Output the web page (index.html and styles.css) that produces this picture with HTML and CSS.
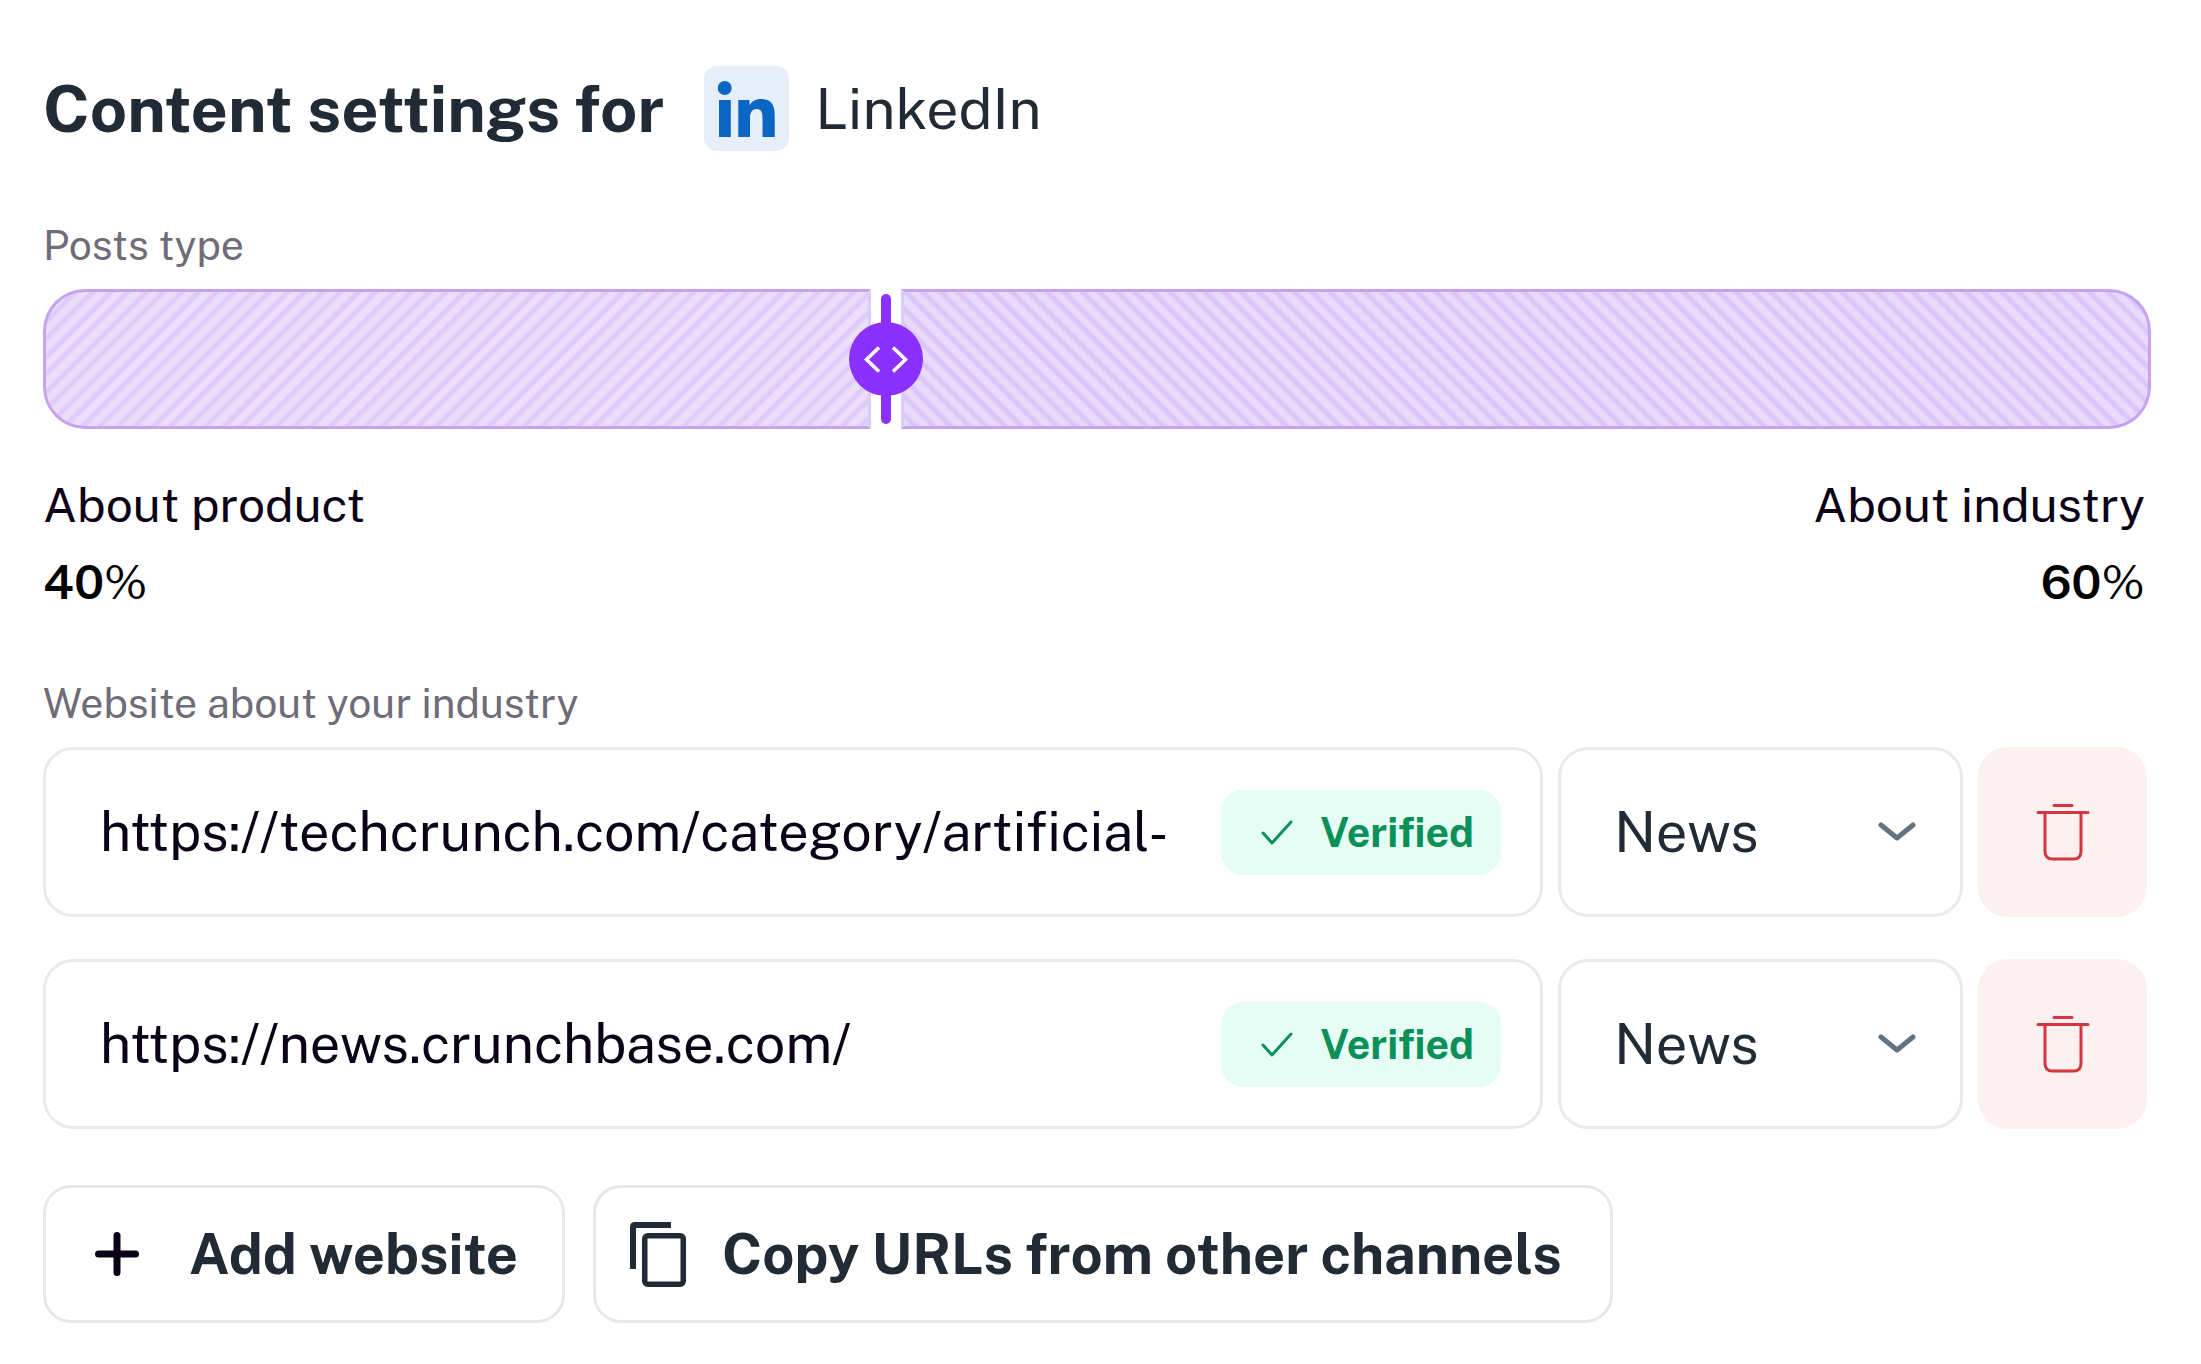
FILE: index.html
```html
<!DOCTYPE html>
<html lang="en">

<head>
    <meta charset="UTF-8">
    <meta name="viewport" content="width=device-width, initial-scale=1.0">
    <title>Content settings</title>
    <link rel="stylesheet" href="styles.css">
</head>

<body>
    <main class="settings">
        <header class="header">
            <h1>Content settings for</h1>
            <div class="channel">
                <svg class="channel-logo" viewBox="0 0 85 85" aria-hidden="true">
                    <rect width="85" height="85" rx="13" fill="#e5eef9" />
                    <g fill="#0a66c2">
                        <circle cx="20.7" cy="22" r="7" />
                        <path d="M15 34h11.8v37H15z" />
                        <path d="M34.3 34h11.2v5.2c2-3.6 6-6.2 11.7-6.2 10.5 0 13.5 6.5 13.5 16.5V71H58.5V52c0-5-.8-9-5.8-9s-6.7 4-6.700 9v19H34.3z" />
                    </g>
                </svg>
                <span>LinkedIn</span>
            </div>
        </header>

        <form id="settingsform">
            <label class="label" for="split">Posts type</label>
            <div class="slider" id="slider" style="--product: 40%">
                <div class="share share-product"></div>
                <div class="handle">
                    <svg viewBox="0 0 74 140" aria-hidden="true">
                        <rect x="32" y="5" width="10" height="130" rx="5" fill="#8c30ff" />
                        <circle cx="37" cy="70" r="37" fill="#8c30ff" />
                        <path d="M30 58.5 17.500 70.5 30 82.5M44 58.5 56.500 70.5 44 82.5" fill="none" stroke="#fff" stroke-width="3.500" />
                    </svg>
                </div>
                <div class="share share-industry"></div>
                <input type="range" id="split" name="split" min="0" max="100" value="40">
            </div>

            <div class="legend">
                <div>
                    <p>About product</p>
                    <p class="amount"><b id="product-value">40</b>%</p>
                </div>
                <div class="legend-right">
                    <p>About industry</p>
                    <p class="amount"><b id="industry-value">60</b>%</p>
                </div>
            </div>

            <label class="label" for="url1">Website about your industry</label>
            <div class="row">
                <div class="field url">
                    <input type="text" id="url1" name="url1" value="https://techcrunch.com/category/artificial-intelligence/">
                    <span class="badge">
                        <svg viewBox="0 0 34 28" aria-hidden="true"><path d="M3 15 12 25 31 4" /></svg>
                        Verified
                    </span>
                </div>
                <div class="field type">
                    <select name="type1" aria-label="Website type">
                        <option>News</option>
                        <option>Blog</option>
                    </select>
                    <svg class="chevron" viewBox="0 0 38 20" aria-hidden="true"><path d="M3 3 19 16 35 3" /></svg>
                </div>
                <button class="delete" type="button" aria-label="Delete website">
                    <svg viewBox="0 0 54 58" aria-hidden="true"><path d="M18 2.500H36M2 9.500H52M9 9.500V48.500Q9 56 16.500 56H37.500Q45 56 45 48.500V9.500" /></svg>
                </button>
            </div>
            <div class="row">
                <div class="field url">
                    <input type="text" id="url2" name="url2" value="https://news.crunchbase.com/" aria-label="Website about your industry">
                    <span class="badge">
                        <svg viewBox="0 0 34 28" aria-hidden="true"><path d="M3 15 12 25 31 4" /></svg>
                        Verified
                    </span>
                </div>
                <div class="field type">
                    <select name="type2" aria-label="Website type">
                        <option>News</option>
                        <option>Blog</option>
                    </select>
                    <svg class="chevron" viewBox="0 0 38 20" aria-hidden="true"><path d="M3 3 19 16 35 3" /></svg>
                </div>
                <button class="delete" type="button" aria-label="Delete website">
                    <svg viewBox="0 0 54 58" aria-hidden="true"><path d="M18 2.500H36M2 9.500H52M9 9.500V48.500Q9 56 16.500 56H37.500Q45 56 45 48.500V9.500" /></svg>
                </button>
            </div>

            <div class="actions">
                <button class="button add" type="button">
                    <svg class="icon-plus" viewBox="0 0 44 44" aria-hidden="true"><path d="M22 3.500V40.500M3.500 22H40.500" /></svg>
                    Add website
                </button>
                <button class="button copy" type="button">
                    <svg class="icon-copy" viewBox="0 0 56 65" aria-hidden="true">
                        <path d="M0 47V5Q0 0 5 0H41V6H6V47Z" fill="#212b36" />
                        <rect x="14.750" y="13.750" width="38.500" height="48.500" rx="3" fill="none" stroke="#212b36" stroke-width="5.500" />
                    </svg>
                    Copy URLs from other channels
                </button>
            </div>
        </form>
    </main>
    <script>
        const split = document.getElementById("split");
        split.addEventListener('input', () => {
            const product = Number(split.value);
            document.getElementById("slider").style.setProperty("--product", product + "%");
            document.getElementById("product-value").textContent = product;
            document.getElementById("industry-value").textContent = 100 - product;
        })
    </script>
</body>

</html>
```
FILE: styles.css
```css
* {
    margin: 0;
    padding: 0;
    box-sizing: border-box;
    font-family: 'Public Sans', 'Liberation Sans', Arial, sans-serif;
}

body {
    background-color: #fff;
    color: #212b36;
}

.settings {
    padding: 66px 50px 40px 43px;
}

.header {
    display: flex;
    align-items: center;
    gap: 40px;
    margin-bottom: 68px;
}

h1 {
    font-size: 65px;
    line-height: 84px;
}

.channel {
    display: flex;
    align-items: center;
    gap: 26px;
    font-size: 57px;
    line-height: 84px;
}

.channel-logo {
    width: 85px;
    height: 85px;
}

.label {
    display: block;
    color: #706b78;
    font-size: 41px;
    line-height: 52px;
    margin-bottom: 18px;
}

/* posts type slider */
.slider {
    position: relative;
    display: flex;
    height: 140px;
}

.slider input {
    position: absolute;
    inset: 0;
    width: 100%;
    height: 100%;
    opacity: 0;
    cursor: ew-resize;
}

.share {
    border: 3px solid #c5a3f0;
}

.share-product {
    width: calc(var(--product) - 15px);
    border-right-color: #dfcbfa;
    border-radius: 42px 0 0 42px;
    background: repeating-linear-gradient(135deg, #ebdefb 0, #ebdefb 4px, #dfcbf9 7px, #dfcbf9 9px, #ebdefb 12px, #ebdefb 17px, #dfcbf9 20px, #dfcbf9 22px, #ebdefb 25px);
}

.share-industry {
    flex: 1;
    border-left-color: #dfcbfa;
    border-radius: 0 42px 42px 0;
    background: repeating-linear-gradient(45deg, #e8dafa 0, #e8dafa 4px, #dac5f8 7px, #dac5f8 9px, #e8dafa 12px, #e8dafa 17px, #dac5f8 20px, #dac5f8 22px, #e8dafa 25px);
}

.handle {
    display: flex;
    justify-content: center;
    width: 30px;
}

.handle svg {
    flex: none;
    width: 74px;
    height: 140px;
    z-index: 1;
}

.legend {
    display: flex;
    justify-content: space-between;
    padding-right: 6px;
    margin: 37px 0 57px;
    color: #0c0217;
    font-size: 48px;
    line-height: 77px;
}

.legend-right {
    text-align: right;
}

.amount {
    color: #000;
}

.amount b {
    font-weight: 600;
}

/* websites */
.row {
    display: flex;
    gap: 15px;
    padding-right: 4px;
    margin-bottom: 42px;
}

.field {
    display: flex;
    align-items: center;
    height: 170px;
    border: 3px solid #e8eaec;
    border-radius: 30px;
    background-color: #fff;
}

.url {
    flex: 1;
    gap: 56px;
    padding: 0 39px 0 54px;
}

.url input {
    flex: 1;
    min-width: 0;
    border: none;
    outline: none;
    background: none;
    color: #0c0217;
    font-size: 54px;
    line-height: 84px;
}

.badge {
    display: flex;
    align-items: center;
    gap: 26px;
    height: 85px;
    padding: 0 27px 0 39px;
    border-radius: 22px;
    background-color: #e5fdf4;
    color: #0a9058;
    font-size: 41px;
    font-weight: bold;
}

.badge svg {
    width: 34px;
    height: 28px;
    fill: none;
    stroke: #0a9058;
    stroke-width: 3;
    stroke-linecap: round;
    stroke-linejoin: round;
}

.type {
    position: relative;
    width: 405px;
}

.type select {
    appearance: none;
    width: 100%;
    height: 100%;
    padding: 0 90px 0 53px;
    border: none;
    border-radius: 30px;
    background: none;
    color: #212b36;
    font-size: 56px;
}

.chevron {
    position: absolute;
    right: 44px;
    width: 38px;
    height: 20px;
    fill: none;
    stroke: #637381;
    stroke-width: 5;
    stroke-linecap: round;
    stroke-linejoin: round;
    pointer-events: none;
}

.delete {
    display: flex;
    align-items: center;
    justify-content: center;
    width: 169px;
    height: 170px;
    border: none;
    border-radius: 30px;
    background-color: #fdf0f0;
    cursor: pointer;
}

.delete svg {
    width: 54px;
    height: 58px;
    fill: none;
    stroke: #d4353f;
    stroke-width: 3;
    stroke-linecap: round;
}

.actions {
    display: flex;
    gap: 28px;
    margin-top: 56px;
}

.button {
    display: flex;
    align-items: center;
    height: 138px;
    border: 3px solid #e5e8ea;
    border-radius: 28px;
    background-color: #fff;
    color: #212b36;
    font-size: 56px;
    font-weight: bold;
    cursor: pointer;
}

.add {
    gap: 50px;
    padding: 0 44px 0 49px;
}

.copy {
    gap: 36px;
    padding: 0 48px 0 34px;
}

.icon-plus {
    width: 44px;
    height: 44px;
    fill: none;
    stroke: #0c0217;
    stroke-width: 7;
    stroke-linecap: round;
}

.icon-copy {
    width: 56px;
    height: 65px;
}
```
